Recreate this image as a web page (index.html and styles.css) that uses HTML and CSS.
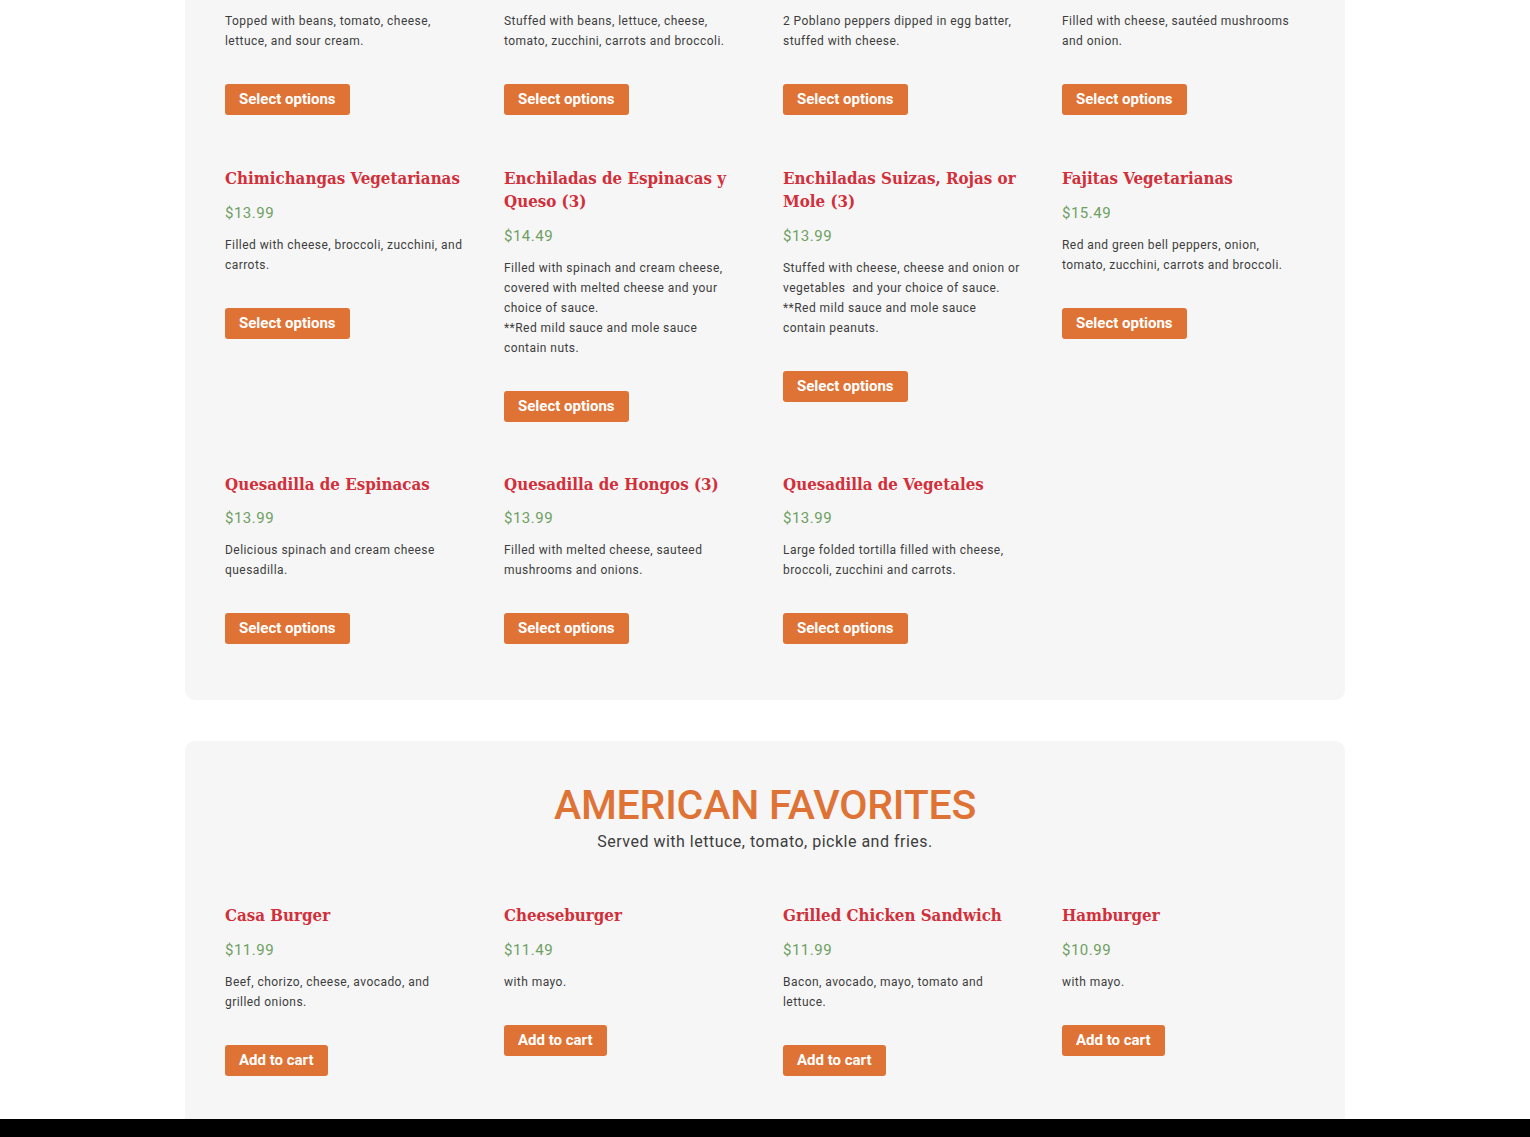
FILE: index.html
```html
<!DOCTYPE html>
<html lang="en">
<head>
<meta charset="utf-8">
<title>Menu</title>
<link rel="stylesheet" href="styles.css">
</head>
<body>
<main class="page">
  <section class="card card-cut">
    <div class="grid">
      <div class="item item-cut">
        <p class="desc">Topped with beans, tomato, cheese, lettuce, and sour cream.</p>
        <a class="btn" href="#">Select options</a>
      </div>
      <div class="item item-cut">
        <p class="desc">Stuffed with beans, lettuce, cheese, tomato, zucchini, carrots and broccoli.</p>
        <a class="btn" href="#">Select options</a>
      </div>
      <div class="item item-cut">
        <p class="desc">2 Poblano peppers dipped in egg batter, stuffed with cheese.</p>
        <a class="btn" href="#">Select options</a>
      </div>
      <div class="item item-cut">
        <p class="desc">Filled with cheese, sautéed mushrooms and onion.</p>
        <a class="btn" href="#">Select options</a>
      </div>

      <div class="item">
        <h3 class="title">Chimichangas Vegetarianas</h3>
        <div class="price">$13.99</div>
        <p class="desc">Filled with cheese, broccoli, zucchini, and carrots.</p>
        <a class="btn" href="#">Select options</a>
      </div>
      <div class="item">
        <h3 class="title">Enchiladas de Espinacas y Queso (3)</h3>
        <div class="price">$14.49</div>
        <p class="desc">Filled with spinach and cream cheese, covered with melted cheese and your choice of sauce.<br>**Red mild sauce and mole sauce contain nuts.</p>
        <a class="btn" href="#">Select options</a>
      </div>
      <div class="item">
        <h3 class="title">Enchiladas Suizas, Rojas or Mole (3)</h3>
        <div class="price">$13.99</div>
        <p class="desc">Stuffed with cheese, cheese and onion or vegetables&nbsp; and your choice of sauce.<br>**Red mild sauce and mole sauce contain peanuts.</p>
        <a class="btn" href="#">Select options</a>
      </div>
      <div class="item">
        <h3 class="title">Fajitas Vegetarianas</h3>
        <div class="price">$15.49</div>
        <p class="desc">Red and green bell peppers, onion, tomato, zucchini, carrots and broccoli.</p>
        <a class="btn" href="#">Select options</a>
      </div>

      <div class="item">
        <h3 class="title">Quesadilla de Espinacas</h3>
        <div class="price">$13.99</div>
        <p class="desc">Delicious spinach and cream cheese quesadilla.</p>
        <a class="btn" href="#">Select options</a>
      </div>
      <div class="item">
        <h3 class="title">Quesadilla de Hongos (3)</h3>
        <div class="price">$13.99</div>
        <p class="desc">Filled with melted cheese, sauteed mushrooms and onions.</p>
        <a class="btn" href="#">Select options</a>
      </div>
      <div class="item">
        <h3 class="title">Quesadilla de Vegetales</h3>
        <div class="price">$13.99</div>
        <p class="desc">Large folded tortilla filled with cheese, broccoli, zucchini and carrots.</p>
        <a class="btn" href="#">Select options</a>
      </div>
    </div>
  </section>

  <section class="card card-american">
    <header class="section-head">
      <h2 class="section-title">AMERICAN FAVORITES</h2>
      <p class="section-sub">Served with lettuce, tomato, pickle and fries.</p>
    </header>
    <div class="grid">
      <div class="item">
        <h3 class="title">Casa Burger</h3>
        <div class="price">$11.99</div>
        <p class="desc">Beef, chorizo, cheese, avocado, and grilled onions.</p>
        <a class="btn" href="#">Add to cart</a>
      </div>
      <div class="item">
        <h3 class="title">Cheeseburger</h3>
        <div class="price">$11.49</div>
        <p class="desc">with mayo.</p>
        <a class="btn" href="#">Add to cart</a>
      </div>
      <div class="item">
        <h3 class="title">Grilled Chicken Sandwich</h3>
        <div class="price">$11.99</div>
        <p class="desc">Bacon, avocado, mayo, tomato and lettuce.</p>
        <a class="btn" href="#">Add to cart</a>
      </div>
      <div class="item">
        <h3 class="title">Hamburger</h3>
        <div class="price">$10.99</div>
        <p class="desc">with mayo.</p>
        <a class="btn" href="#">Add to cart</a>
      </div>
    </div>
  </section>
</main>
<footer class="footer"></footer>
</body>
</html>
```

FILE: styles.css
```css
* { box-sizing: border-box; }

html, body {
  margin: 0;
  padding: 0;
  background: #ffffff;
}

body {
  font-family: Roboto, "Noto Sans", Arial, sans-serif;
  color: #3d3d3d;
  overflow: hidden;
}

.page {
  width: 1160px;
  margin: 0 auto;
  display: flex;
  flex-direction: column;
  gap: 41px;
}

.card {
  background: #f6f6f6;
  border-radius: 10px;
  padding: 0 40px;
}

.card-cut {
  border-top-left-radius: 0;
  border-top-right-radius: 0;
  padding-top: 11px;
  padding-bottom: 56px;
}

.card-american {
  padding-top: 40px;
  height: 378px;
  border-bottom-left-radius: 0;
  border-bottom-right-radius: 0;
}

.grid {
  display: grid;
  grid-template-columns: repeat(4, 238px);
  column-gap: 41px;
  row-gap: 51px;
  align-items: start;
}

.item {
  display: flex;
  flex-direction: column;
  align-items: flex-start;
}

.item-cut { margin-bottom: 1px; }

.title {
  margin: 0 0 11.5px 0;
  font-family: "DejaVu Serif", "Liberation Serif", serif;
  font-stretch: condensed;
  font-weight: bold;
  font-size: 16.8px;
  line-height: 23px;
  color: #d22f3a;
}

.price {
  font-size: 15px;
  line-height: 22px;
  color: #6f9f62;
  letter-spacing: 0.5px;
  margin-bottom: 11px;
}

.desc {
  margin: 0 0 33px 0;
  font-size: 12px;
  line-height: 20px;
  letter-spacing: 0.45px;
  color: #3d3d3d;
}

.btn {
  display: inline-block;
  background: #df7335;
  color: #ffffff;
  font-weight: bold;
  font-size: 15px;
  line-height: 17px;
  padding: 7px 14px;
  border-radius: 3px;
  text-decoration: none;
}

.section-head {
  text-align: center;
  margin-bottom: 50px;
}

.section-title {
  margin: 0;
  font-weight: 500;
  font-size: 41px;
  line-height: 48px;
  color: #df7335;
  letter-spacing: -0.2px;
}

.section-sub {
  margin: 1px 0 0 0;
  font-size: 16px;
  line-height: 24px;
  letter-spacing: 0.5px;
  color: #3d3d3d;
}

.footer {
  height: 18px;
  background: #000000;
}
```
